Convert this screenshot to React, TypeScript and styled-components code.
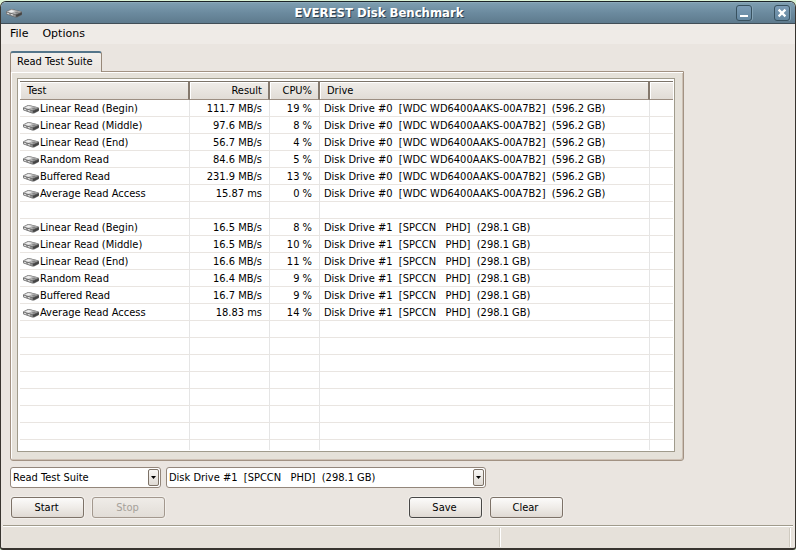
import React from 'react';
import styled, { createGlobalStyle, css } from 'styled-components';

const uiFont = '"DejaVu Sans Condensed", "DejaVu Sans", sans-serif';

const GlobalStyle = createGlobalStyle`
  * { box-sizing: border-box; }
  body { margin: 0; background: #dcf3d6; font: 11px/16px ${uiFont}; color: #000; }
  button, select { font: inherit; color: inherit; }
`;

const Screen = styled.div`
  display: flex;
  min-height: 100vh;
  padding-top: 1px;
`;

const Window = styled.div`
  display: flex;
  flex-direction: column;
  flex: 1;
  min-width: 0;
  border: 1px solid #38342f;
  border-top-color: #1b2428;
  border-bottom-width: 2px;
  border-radius: 6px 6px 3px 3px;
  background: #eae5e0;
  overflow: hidden;
`;

const TitleBar = styled.header`
  display: flex;
  align-items: center;
  height: 22px;
  padding: 0 5px 0 5px;
  border-top: 1px solid #8caabb;
  border-bottom: 1px solid #414e57;
  background: linear-gradient(#7d9db0, #6b8a9e 50%, #5e7a8d);
`;

const Title = styled.h1`
  flex: 1;
  margin: 0;
  text-align: center;
  font: bold 13px/16px "DejaVu Sans Condensed", "DejaVu Sans", sans-serif;
  color: #fff;
  text-shadow: 1px 1px 0 #2f4250;
`;

const CaptionButtons = styled.div`
  display: flex;
  gap: 22px;
`;

const CaptionButton = styled.button`
  display: flex;
  width: 16px;
  height: 16px;
  padding: 0;
  border: 1px solid #38515f;
  border-radius: 3px;
  background: linear-gradient(#7d9cb6, #6487a0);
  box-shadow: 1px 0 0 #86a4b6;
`;

const MenuBar = styled.nav`
  display: flex;
  gap: 14px;
  height: 20px;
  padding: 0 9px;
  background: #efebe7;
`;

const MenuItem = styled.button`
  padding: 0;
  border: 0;
  background: none;
  font: 11px/16px "DejaVu Sans", sans-serif;
`;

const Content = styled.main`
  display: flex;
  flex-direction: column;
  flex: 1;
  padding: 7px 9px 7px;
`;

const Tab = styled.button`
  position: relative;
  align-self: flex-start;
  height: 21px;
  padding: 0 8px 2px 6px;
  border: 1px solid #978879;
  border-top: 2px solid #54758a;
  border-bottom: 0;
  border-radius: 3px 3px 0 0;
  background: linear-gradient(#f3f0ec, #eae5e0);
  z-index: 1;
`;

const TabPanel = styled.section`
  display: flex;
  flex: 1;
  margin: -1px 102px 0 0;
  padding: 6px 8px 8px 6px;
  border: 1px solid #a29283;
  border-radius: 0 0 3px 3px;
  background: #e5e1d9;
  box-shadow: inset 1px 1px 0 #fff, inset -1px -1px 0 #cdc0b4;
`;

const ListFrame = styled.div`
  display: flex;
  flex: 1;
  padding: 2px 1px 1px 2px;
  border: 1px solid #a09b8c;
  background: #fff;
`;

const Table = styled.table`
  width: 100%;
  height: 100%;
  table-layout: fixed;
  border-collapse: separate;
  border-spacing: 0;
`;

const HeadCell = styled.th<{ $right?: boolean; $last?: boolean }>`
  height: 19px;
  padding: 0 6px 0 7px;
  border-top: 1px solid #7c746a;
  border-bottom: 1px solid #9c8e82;
  border-right: ${p => (p.$last ? '0' : '2px solid #84786c')};
  background: linear-gradient(#f0ede9, #e1dcd6);
  box-shadow: inset 1px 1px 0 #fff;
  font-weight: normal;
  line-height: 16px;
  text-align: ${p => (p.$right ? 'right' : 'left')};
`;

const Cell = styled.td<{ $right?: boolean; $last?: boolean }>`
  height: 17px;
  padding: 2px 7px 0 4px;
  border-bottom: 1px solid #e9e5e1;
  border-right: ${p => (p.$last ? '0' : '1px solid #e5e5e5')};
  line-height: 14px;
  white-space: pre;
  overflow: hidden;
  text-align: ${p => (p.$right ? 'right' : 'left')};
`;

const NameCell = styled(Cell)`
  padding-left: 3px;
`;

const TailCell = styled(Cell)`
  height: auto;
  padding: 0;
  border-bottom: 0;
`;

const TestName = styled.span`
  display: flex;
  align-items: center;
  gap: 1px;
`;

const Controls = styled.div`
  display: flex;
  gap: 5px;
  margin-top: 6px;
`;

const SelectBox = styled.div<{ $width: number }>`
  position: relative;
  width: ${p => p.$width}px;
`;

const Select = styled.select`
  display: block;
  width: 100%;
  height: 21px;
  padding: 1px 20px 0 2px;
  appearance: none;
  border: 1px solid #93867b;
  border-radius: 3px;
  background: #fff;
`;

const DropMark = styled.span`
  position: absolute;
  top: 2px;
  right: 2px;
  display: flex;
  width: 11px;
  height: 17px;
  border: 1px solid #7c7166;
  border-radius: 2px;
  background: linear-gradient(#f8f7f5, #dfdad4);
  pointer-events: none;
`;

const Actions = styled.div`
  display: flex;
  gap: 8px;
  max-width: 552px;
  margin: 9px 0 0 1px;
`;

const Spacer = styled.div`
  flex: 1;
`;

const PushButton = styled.button<{ $primary?: boolean }>`
  width: 73px;
  height: 21px;
  padding: 1px 2px 0 0;
  border: 1px solid #7d7268;
  border-radius: 3px;
  background: linear-gradient(#fcfbfa, #efece8 50%, #dfd9d3);
  box-shadow: 0 0 0 1px #f2efeb;
  ${p => p.$primary && css`border-color: #484746;`}
  &:disabled {
    color: #a5a099;
    border-color: #a3988e;
    background: linear-gradient(#efece8, #e2ddd7);
  }
`;

const StatusBar = styled.footer`
  display: flex;
  height: 23px;
  margin: 0 2px;
  padding: 2px 2px 1px;
  border-top: 1px solid #a09b8c;
  background: #e6e1da;
  box-shadow: inset 0 1px 0 #fff;
`;

const StatusPane = styled.div<{ $grow: number }>`
  flex: ${p => p.$grow} 1 0;
  border-right: 1px solid #fff;
  box-shadow: inset -1px 0 0 #cfcac0;
`;

const DiskIcon = () => (
  <svg width="16" height="11" viewBox="0 0 16 11" aria-hidden="true">
    <path d="M0 4Q0 3 2 2.5L5 1Q6 .7 8 1.4L15 3.2Q16 3.6 16 4.6V6.6Q16 7.3 14 8L11 9.4Q10 9.8 8.5 9.2L1.5 6.8Q0 6.2 0 5.4z" fill="#666" />
    <path d="M.4 3.8 5.4 1.3 15.4 3.8 9.7 6.3z" fill="#b5b5b5" />
    <path d="M2 3.7 5.4 2 9 3 5.7 4.8z" fill="#eee" />
    <path d="M8.6 4.8 11.2 3.5 14 4.1 10.3 5.7z" fill="#858585" />
    <path d="M.3 4.4 9.5 7V9L.6 6z" fill="#969696" />
    <path d="M10 7 15.8 4.6V6.5L10.5 9z" fill="#444" />
    <path d="M1 5.1 3 5.8M5 6.4 7 7" stroke="#e2e2e2" fill="none" />
  </svg>
);

type Row = [string, string, string, string];
const wdc = 'Disk Drive #0  [WDC WD6400AAKS-00A7B2]  (596.2 GB)';
const spccn = 'Disk Drive #1  [SPCCN   PHD]  (298.1 GB)';
const rows: (Row | null)[] = [
  ['Linear Read (Begin)', '111.7 MB/s', '19 %', wdc],
  ['Linear Read (Middle)', '97.6 MB/s', '8 %', wdc],
  ['Linear Read (End)', '56.7 MB/s', '4 %', wdc],
  ['Random Read', '84.6 MB/s', '5 %', wdc],
  ['Buffered Read', '231.9 MB/s', '13 %', wdc],
  ['Average Read Access', '15.87 ms', '0 %', wdc],
  null,
  ['Linear Read (Begin)', '16.5 MB/s', '8 %', spccn],
  ['Linear Read (Middle)', '16.5 MB/s', '10 %', spccn],
  ['Linear Read (End)', '16.6 MB/s', '11 %', spccn],
  ['Random Read', '16.4 MB/s', '9 %', spccn],
  ['Buffered Read', '16.7 MB/s', '9 %', spccn],
  ['Average Read Access', '18.83 ms', '14 %', spccn],
  null, null, null, null, null, null, null,
];

const Picker = ({ label, value, width }: { label: string; value: string; width: number }) => (
  <SelectBox $width={width}>
    <Select aria-label={label} defaultValue={value}>
      <option>{value}</option>
    </Select>
    <DropMark>
      <svg width="9" height="15" viewBox="0 0 9 15" aria-hidden="true">
        <path d="M2 6h5L4.5 9z" fill="#000" />
      </svg>
    </DropMark>
  </SelectBox>
);

export default function App() {
  return (
    <Screen>
      <GlobalStyle />
      <Window>
        <TitleBar>
          <DiskIcon />
          <Title>EVEREST Disk Benchmark</Title>
          <CaptionButtons>
            <CaptionButton aria-label="Minimize">
              <svg width="14" height="14" viewBox="0 0 14 14"><path d="M3 9h8v2H3z" fill="#fff" /></svg>
            </CaptionButton>
            <CaptionButton aria-label="Close">
              <svg width="14" height="14" viewBox="0 0 14 14"><path d="M3.6 3.6l6.8 6.8M10.4 3.6l-6.8 6.8" stroke="#fff" strokeWidth="2.2" /></svg>
            </CaptionButton>
          </CaptionButtons>
        </TitleBar>
        <MenuBar>
          <MenuItem>File</MenuItem>
          <MenuItem>Options</MenuItem>
        </MenuBar>
        <Content>
          <Tab>Read Test Suite</Tab>
          <TabPanel>
            <ListFrame>
              <Table>
                <colgroup>
                  <col width="170" />
                  <col width="80" />
                  <col width="50" />
                  <col />
                  <col width="23" />
                </colgroup>
                <thead>
                  <tr>
                    <HeadCell>Test</HeadCell>
                    <HeadCell $right>Result</HeadCell>
                    <HeadCell $right>CPU%</HeadCell>
                    <HeadCell>Drive</HeadCell>
                    <HeadCell $last />
                  </tr>
                </thead>
                <tbody>
                  {rows.map((row, i) => (
                    <tr key={i}>
                      <NameCell>{row && <TestName><DiskIcon />{row[0]}</TestName>}</NameCell>
                      <Cell $right>{row?.[1]}</Cell>
                      <Cell $right>{row?.[2]}</Cell>
                      <Cell>{row?.[3]}</Cell>
                      <Cell $last />
                    </tr>
                  ))}
                  <tr>
                    <TailCell /><TailCell /><TailCell /><TailCell /><TailCell $last />
                  </tr>
                </tbody>
              </Table>
            </ListFrame>
          </TabPanel>
          <Controls>
            <Picker label="Test" value="Read Test Suite" width={151} />
            <Picker label="Drive" value={spccn.replace(/ /g, '\u00a0')} width={320} />
          </Controls>
          <Actions>
            <PushButton>Start</PushButton>
            <PushButton disabled>Stop</PushButton>
            <Spacer />
            <PushButton $primary>Save</PushButton>
            <PushButton>Clear</PushButton>
          </Actions>
        </Content>
        <StatusBar>
          <StatusPane $grow={497} />
          <StatusPane $grow={290} />
        </StatusBar>
      </Window>
    </Screen>
  );
}
